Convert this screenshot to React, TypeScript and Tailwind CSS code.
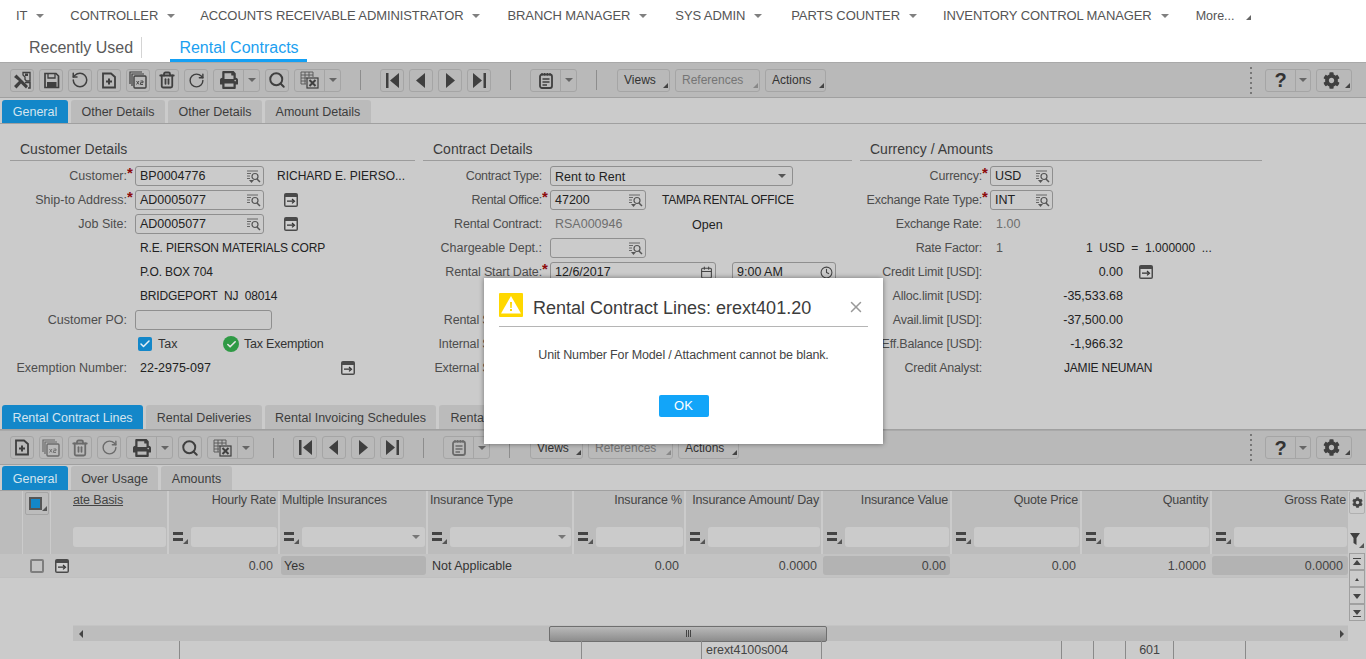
import React from "react";
import { Calendar, Clock, Search, RotateCw, RotateCcw, Trash2, Check, X } from "lucide-react";
import { FaCog, FaPrint } from "react-icons/fa";

const D = "#3f3f3f";

function Corner({ c = "#555" }: { c?: string }) {
  return (
    <svg width="5" height="5" viewBox="0 0 5 5" className="self-end mb-[3px] shrink-0">
      <path d="M5 0V5H0Z" fill={c} />
    </svg>
  );
}

function Caret({ c = "#777" }: { c?: string }) {
  return (
    <svg width="8" height="4" viewBox="0 0 8 4" className="shrink-0">
      <path d="M0 0H8L4 4Z" fill={c} />
    </svg>
  );
}

function Lookup({ arrow = true }: { arrow?: boolean }) {
  return (
    <svg width="15" height="15" viewBox="0 0 15 15" className="shrink-0">
      <path d="M1 2H12M1 4.5H5M1 7H4M1 9.5H4" stroke="#666" strokeWidth="1" fill="none" />
      <circle cx="9" cy="7.5" r="3" stroke="#555" strokeWidth="1.2" fill="none" />
      <path d="M11 10L14 13" stroke="#555" strokeWidth="1.5" />
      {arrow && <path d="M3 11H8L5.5 14Z" fill="#555" />}
    </svg>
  );
}

function NavIcon() {
  return (
    <svg width="14" height="14" viewBox="0 0 14 14" className="shrink-0">
      <rect width="14" height="14" rx="2" fill="#4a4a4a" />
      <rect x="1.5" y="4" width="11" height="8.5" fill="#d0d0d0" />
      <path d="M3 8.2H9.5M8 6L10.5 8.2L8 10.4" stroke="#333" strokeWidth="1.2" fill="none" />
    </svg>
  );
}

function SaveX() {
  return (
    <svg width="19" height="19" viewBox="0 0 19 19">
      <path d="M1 6L3.5 3.5L9 9L15 15L13 17.5L8 12.5L3.5 17.5L1 15L6 10Z" fill={D} />
      <path d="M10 1.5H17V10H13.5L12 8.5V6L10 4Z" fill="none" stroke={D} strokeWidth="1.3" />
      <rect x="12" y="2.5" width="3" height="2.5" fill={D} />
      <path d="M12 11.5L17 11.5V17H15" fill="none" stroke={D} strokeWidth="1.5" />
    </svg>
  );
}
function Save() {
  return (
    <svg width="17" height="17" viewBox="0 0 17 17">
      <path d="M2 1.5H13L15.5 4V15.5H2Z" fill="none" stroke={D} strokeWidth="1.7" />
      <path d="M5 2V6H12V2" fill="none" stroke={D} strokeWidth="1.3" />
      <rect x="4" y="10" width="9.5" height="5" fill={D} />
    </svg>
  );
}
function NewDoc() {
  return (
    <svg width="16" height="17" viewBox="0 0 16 17">
      <path d="M2 1.5H10L14 5V15.5H2Z" fill="none" stroke={D} strokeWidth="1.8" />
      <path d="M5 9.5H11M8 6.5V12.5" stroke={D} strokeWidth="2" />
    </svg>
  );
}
function Dup({ c = D }: { c?: string }) {
  return (
    <svg width="18" height="18" viewBox="0 0 18 18">
      <path d="M1 13V1H13" fill="none" stroke={c} strokeWidth="1.2" />
      <path d="M3 15V3H15" fill="none" stroke={c} strokeWidth="1.2" />
      <rect x="5" y="5" width="12" height="12" rx="1" fill="none" stroke={c} strokeWidth="1.4" />
      <path d="M7.5 10L10 13.5M10 10L7.5 13.5M11.5 10H14V11.7H11.5V13.5H14" fill="none" stroke={c} strokeWidth="0.9" />
    </svg>
  );
}
function Excel() {
  return (
    <svg width="19" height="18" viewBox="0 0 19 18">
      <path d="M1 1H13V6M1 1V13H6M1 4H13M1 7H7M1 10H6M5 1V13M9 1V6" fill="none" stroke="#555" strokeWidth="0.9" />
      <rect x="7" y="7" width="11" height="10" fill="none" stroke={D} strokeWidth="1.2" />
      <path d="M9.5 9L15.5 15M15.5 9L9.5 15" stroke={D} strokeWidth="2" />
    </svg>
  );
}
function Notes({ c = D }: { c?: string }) {
  return (
    <svg width="14" height="17" viewBox="0 0 14 17">
      <rect x="1" y="2.5" width="12" height="13.5" rx="2" fill="none" stroke={c} strokeWidth="1.8" />
      <path d="M3 1V3.5M5.6 1V3.5M8.4 1V3.5M11 1V3.5" stroke={c} strokeWidth="1.2" />
      <path d="M3.5 7H10.5M3.5 10H10.5M3.5 13H8" stroke={c} strokeWidth="1.3" />
    </svg>
  );
}
function NavArrow({ kind }: { kind: "first" | "prev" | "next" | "last" }) {
  const d = {
    first: "M2 1H4.5V16H2ZM15 1V16L6 8.5Z",
    prev: "M12 1V16L3 8.5Z",
    next: "M4 1V16L13 8.5Z",
    last: "M12.5 1H15V16H12.5ZM2 1V16L11 8.5Z",
  }[kind];
  return (
    <svg width="17" height="17" viewBox="0 0 17 17">
      <path d={d} fill={D} />
    </svg>
  );
}

function Btn({ children }: { children: React.ReactNode }) {
  return (
    <div className="h-[23px] w-6 shrink-0 rounded-[3px] border border-[#a5a5a5] flex items-center justify-center">
      {children}
    </div>
  );
}

function SplitBtn({ children, w = "w-[47px]" }: { children: React.ReactNode; w?: string }) {
  return (
    <div className={`h-[23px] ${w} shrink-0 rounded-[3px] border border-[#a5a5a5] flex items-center`}>
      <div className="flex-1 flex items-center justify-center h-full border-r border-[#a5a5a5]">{children}</div>
      <div className="w-[15px] flex items-center justify-center">
        <Caret c="#666" />
      </div>
    </div>
  );
}

function TextBtn({ label, w, dim }: { label: string; w: string; dim?: boolean }) {
  return (
    <div className={`h-[23px] ${w} shrink-0 rounded-[3px] border border-[#a5a5a5] flex items-center justify-between pl-[6px] pr-[1px] text-[12px] ${dim ? "text-[#757575]" : "text-[#333]"}`}>
      <span>{label}</span>
      <Corner c={dim ? "#888" : "#444"} />
    </div>
  );
}

const Sep = ({ mr }: { mr: string }) => (
  <div className={`w-px h-[20px] bg-[#8d8d8d] shrink-0 ml-[14px] ${mr}`} />
);

function Toolbar({ full, h }: { full: boolean; h: string }) {
  const dimC = full ? D : "#6b6b6b";
  return (
    <div className={`${h} bg-[#b9b9b9] border-t border-[#a9a9a9] border-b border-b-[#a0a0a0] flex items-center pl-[10px] pr-[14px] gap-[5px] overflow-hidden`}>
      {full && (
        <>
          <Btn><SaveX /></Btn>
          <Btn><Save /></Btn>
          <Btn><RotateCcw size={18} strokeWidth={2} color={D} /></Btn>
        </>
      )}
      <Btn><NewDoc /></Btn>
      <Btn><Dup c={dimC} /></Btn>
      <Btn><Trash2 size={18} strokeWidth={2.4} color={dimC} /></Btn>
      <Btn><RotateCw size={17} strokeWidth={2} color={dimC} /></Btn>
      <SplitBtn><FaPrint size={18} color={D} /></SplitBtn>
      <Btn><Search size={18} strokeWidth={2.6} color={D} /></Btn>
      <SplitBtn><Excel /></SplitBtn>
      <Sep mr="mr-[14px]" />
      <Btn><NavArrow kind="first" /></Btn>
      <Btn><NavArrow kind="prev" /></Btn>
      <Btn><NavArrow kind="next" /></Btn>
      <Btn><NavArrow kind="last" /></Btn>
      <Sep mr="mr-[14px]" />
      <SplitBtn><Notes c={dimC} /></SplitBtn>
      <Sep mr="mr-[15px]" />
      <TextBtn label="Views" w="w-[53px]" />
      <TextBtn label="References" w="w-[85px]" dim />
      <TextBtn label="Actions" w="w-[61px]" />
      <div className="ml-auto mr-[8px] flex flex-col gap-[3px]">
        {[0, 1, 2, 3, 4, 5].map((i) => (
          <div key={i} className="w-[2px] h-[2px] bg-[#777]" />
        ))}
      </div>
      <div className="h-[23px] w-[46px] rounded-[3px] border border-[#a5a5a5] flex items-center">
        <div className="flex-1 h-full border-r border-[#a5a5a5] flex items-center justify-center text-[20px] font-bold text-[#333]">?</div>
        <div className="w-[14px] flex items-center justify-center"><Caret c="#666" /></div>
      </div>
      <div className="h-[23px] w-9 rounded-[3px] border border-[#a5a5a5] flex items-center pl-[6px] pr-[1px] justify-between">
        <FaCog size={17} color={D} />
        <Corner c="#444" />
      </div>
    </div>
  );
}

function Tab({ label, w, active, low }: { label: string; w: string; active?: boolean; low?: boolean }) {
  return (
    <div className={`${w} h-full shrink-0 rounded-t-[3px] flex items-center justify-center text-[12.5px] ${low ? "pt-px" : ""} ${active ? "bg-[#1387c9] text-[#d5e5ef]" : "bg-[#bbbbbb] text-[#3d3d3d]"}`}>
      {label}
    </div>
  );
}

function Label({ text, w, star }: { text: string; w: string; star?: boolean }) {
  return (
    <>
      <div className={`${w} shrink-0 text-right text-[#4d4d4d] whitespace-nowrap flex justify-end`}>{text}</div>
      <div className="w-2 shrink-0 h-full text-[#8d0c0c] text-[15px] leading-[17px] font-bold overflow-hidden">{star ? "*" : ""}</div>
    </>
  );
}

function Input({ w, value, icon }: { w: string; value?: string; icon?: React.ReactNode }) {
  return (
    <div className={`${w} shrink-0 h-5 rounded-[3px] border border-[#8f8f8f] bg-[#cbcbcb] flex items-center justify-between pl-1 pr-[2px] text-[#222]`}>
      <span>{value}</span>
      {icon}
    </div>
  );
}

const Row = ({ children }: { children: React.ReactNode }) => (
  <div className="h-6 flex items-center whitespace-nowrap">{children}</div>
);

const V = ({ children, c = "text-[#222]", cls = "pl-[5px]" }: { children: React.ReactNode; c?: string; cls?: string }) => (
  <div className={`${c} ${cls} whitespace-nowrap`}>{children}</div>
);

function Section({ title, w, children }: { title: string; w: string; children: React.ReactNode }) {
  return (
    <div className={`${w} shrink-0`}>
      <div className="h-[37px] pt-[16px] pl-[10px] border-b border-[#9c9c9c] text-[14px] leading-[18px] text-[#3c3c3c]">{title}</div>
      <div className="pt-[3px]">{children}</div>
    </div>
  );
}

const UP = "text-[12px] tracking-[-0.15px]";

function Customer() {
  const W = "w-[117px]";
  return (
    <Section title="Customer Details" w="w-[405px]">
      <Row>
        <Label text="Customer:" w={W} star />
        <Input w="w-[129px]" value="BP0004776" icon={<Lookup />} />
        <V cls="pl-[13px] text-[12px]">RICHARD E. PIERSO...</V>
      </Row>
      <Row>
        <Label text="Ship-to Address:" w={W} star />
        <Input w="w-[129px]" value="AD0005077" icon={<Lookup arrow={false} />} />
        <div className="ml-5"><NavIcon /></div>
      </Row>
      <Row>
        <Label text="Job Site:" w={W} />
        <Input w="w-[129px]" value="AD0005077" icon={<Lookup arrow={false} />} />
        <div className="ml-5"><NavIcon /></div>
      </Row>
      <Row><Label text="" w={W} /><V cls={`pl-[5px] ${UP}`}>R.E. PIERSON MATERIALS CORP</V></Row>
      <Row><Label text="" w={W} /><V cls={`pl-[5px] ${UP}`}>P.O. BOX 704</V></Row>
      <Row><Label text="" w={W} /><V cls={`pl-[5px] ${UP}`}>BRIDGEPORT&nbsp; NJ&nbsp; 08014</V></Row>
      <Row>
        <Label text="Customer PO:" w={W} />
        <Input w="w-[137px]" />
      </Row>
      <Row>
        <Label text="" w={W} />
        <div className="ml-[3px] w-[14px] h-[14px] rounded-[2px] bg-[#1387c9] flex items-center justify-center">
          <Check size={12} strokeWidth={3} color="#e8f0f5" />
        </div>
        <div className="ml-[6px] text-[#333] w-[65px]">Tax</div>
        <div className="w-4 h-4 rounded-full bg-[#2f9a45] flex items-center justify-center">
          <Check size={11} strokeWidth={3.5} color="#e6e6e6" />
        </div>
        <div className="ml-[5px] text-[#333] tracking-[-0.2px]">Tax Exemption</div>
      </Row>
      <Row>
        <Label text="Exemption Number:" w={W} />
        <V cls="pl-[5px] w-[206px]">22-2975-097</V>
        <NavIcon />
      </Row>
    </Section>
  );
}

function Contract() {
  const W = "w-[119px] tracking-[-0.15px]";
  const W2 = "w-[119px] tracking-[-0.35px]";
  return (
    <Section title="Contract Details" w="w-[429px]">
      <Row>
        <Label text="Contract Type:" w={W2} />
        <div className="w-[243px] h-5 rounded-[3px] border border-[#8f8f8f] flex items-center justify-between pl-1 pr-[6px] text-[#222]">
          <span className="pt-px">Rent to Rent</span>
          <Caret c="#555" />
        </div>
      </Row>
      <Row>
        <Label text="Rental Office:" w={W2} star />
        <Input w="w-[96px]" value="47200" icon={<Lookup />} />
        <V cls="pl-[16px] text-[12px] tracking-[-0.2px]">TAMPA RENTAL OFFICE</V>
      </Row>
      <Row>
        <Label text="Rental Contract:" w={W} />
        <V c="text-[#6e6e6e]" cls="pl-[5px] w-[142px]">RSA000946</V>
        <div className="text-[#222] mt-[2px]">Open</div>
      </Row>
      <Row>
        <Label text="Chargeable Dept.:" w="w-[119px]" />
        <Input w="w-[96px]" icon={<Lookup />} />
      </Row>
      <Row>
        <Label text="Rental Start Date:" w={W} star />
        <Input w="w-[166px]" value="12/6/2017" icon={<Calendar size={13} color="#444" />} />
        <div className="ml-4">
          <Input w="w-[104px]" value="9:00 AM" icon={<Clock size={13} color="#444" />} />
        </div>
      </Row>
      <Row><Label text="" w={W} /></Row>
      <Row><Label text="Rental Sales Rep:" w={W} /></Row>
      <Row><Label text="Internal Sales Rep:" w={W} /></Row>
      <Row><Label text="External Sales Rep:" w={W} /></Row>
    </Section>
  );
}

function Currency() {
  const W = "w-[122px] tracking-[-0.2px]";
  const Num = ({ children }: { children: React.ReactNode }) => (
    <div className="w-[133px] text-right text-[#222]">{children}</div>
  );
  return (
    <Section title="Currency / Amounts" w="w-[402px]">
      <Row><Label text="Currency:" w={W} star /><Input w="w-[63px]" value="USD" icon={<Lookup />} /></Row>
      <Row><Label text="Exchange Rate Type:" w={W} star /><Input w="w-[63px]" value="INT" icon={<Lookup />} /></Row>
      <Row><Label text="Exchange Rate:" w={W} /><V c="text-[#6e6e6e]" cls="pl-[6px]">1.00</V></Row>
      <Row>
        <Label text="Rate Factor:" w={W} />
        <V c="text-[#555]" cls="pl-[6px] w-[96px]">1</V>
        <V cls="text-[12px]">1&nbsp; USD&nbsp; =&nbsp; 1.000000&nbsp; ...</V>
      </Row>
      <Row><Label text="Credit Limit [USD]:" w={W} /><Num>0.00</Num><div className="ml-4"><NavIcon /></div></Row>
      <Row><Label text="Alloc.limit [USD]:" w={W} /><Num>-35,533.68</Num></Row>
      <Row><Label text="Avail.limit [USD]:" w={W} /><Num>-37,500.00</Num></Row>
      <Row><Label text="Eff.Balance [USD]:" w={W} /><Num>-1,966.32</Num></Row>
      <Row><Label text="Credit Analyst:" w={W} /><V cls="pl-[74px] text-[12px] tracking-[-0.2px]">JAMIE NEUMAN</V></Row>
    </Section>
  );
}

function OpIcon() {
  return (
    <div className="w-[15px] ml-[2px] h-[20px] shrink-0 flex items-center justify-between">
      <svg width="10" height="9" viewBox="0 0 10 9" className="shrink-0 mb-[2px]">
        <path d="M0 0H10V3H0ZM0 6H10V9H0Z" fill="#444" />
      </svg>
      <Corner c="#555" />
    </div>
  );
}

type Col = {
  title: string;
  w: string;
  right?: boolean;
  select?: boolean;
  val?: string;
  hl?: boolean;
  under?: boolean;
  noOp?: boolean;
  left?: boolean;
  pr?: string;
};

const cols: Col[] = [
  { title: "ate Basis", w: "w-[94px]", under: true, noOp: true },
  { title: "Hourly Rate", w: "w-[111px]", right: true, val: "0.00", pr: "pr-[5px]" },
  { title: "Multiple Insurances", w: "w-[148px]", select: true, val: "Yes", hl: true, left: true },
  { title: "Insurance Type", w: "w-[146px]", select: true, val: "Not Applicable", left: true },
  { title: "Insurance %", w: "w-[112px]", right: true, val: "0.00", pr: "pr-[5px]" },
  { title: "Insurance Amount/ Day", w: "w-[137px]", right: true, val: "0.0000", pr: "pr-[4px]" },
  { title: "Insurance Value", w: "w-[129px]", right: true, val: "0.00", hl: true, pr: "pr-[4px]" },
  { title: "Quote Price", w: "w-[130px]", right: true, val: "0.00", pr: "pr-[4px]" },
  { title: "Quantity", w: "w-[130px]", right: true, val: "1.0000", pr: "pr-[4px]" },
  { title: "Gross Rate", w: "w-[138px]", right: true, val: "0.0000", hl: true, pr: "pr-[5px]" },
];

function Grid() {
  return (
    <div className="flex">
      <div className="w-[1348px] shrink-0">
        <div className="h-[63px] flex bg-[#bcbcbc]">
          <div className="w-[22px] shrink-0" />
          <div className="w-[29px] shrink-0 border-l border-r border-[#cbcbcb] flex justify-center pt-px">
            <div className="w-[24px] h-[23px] rounded-[2px] border border-[#a5a5a5] flex items-center justify-between pl-[3px] pr-px">
              <div className="w-[13px] h-[13px] bg-[#1387c9] border-2 border-[#555] shrink-0" />
              <Corner c="#555" />
            </div>
          </div>
          <div className="w-[22px] shrink-0" />
          {cols.map((c, i) => (
            <div key={c.title} className={`${c.w} shrink-0 ${i === 0 ? "" : "border-l-2 border-[#cbcbcb] pl-[2px]"} pr-px`}>
              <div className={`h-[36px] pt-[1px] leading-[16px] text-[12.5px] tracking-[-0.15px] text-[#444] whitespace-nowrap ${c.right ? "text-right pr-px" : ""} ${c.under ? "underline" : ""}`}>
                {c.title}
              </div>
              <div className="flex items-center gap-[3px]">
                {!c.noOp && <OpIcon />}
                <div className="flex-1 h-5 rounded-[3px] bg-[#cbcbcb] flex items-center justify-end pr-[5px]">
                  {c.select && <Caret c="#777" />}
                </div>
              </div>
            </div>
          ))}
        </div>
        <div className="h-6 flex bg-[#c3c3c3] border-b border-[#c0c0c0]">
          <div className="w-[73px] shrink-0 flex items-center pl-[30px] gap-[11px]">
            <div className="w-[14px] h-[14px] rounded-[2px] border-2 border-[#7e7e7e] shrink-0" />
            <NavIcon />
          </div>
          {cols.map((c) => (
            <div key={c.title} className={`${c.w} shrink-0 h-full flex items-center`}>
              {c.val && (
                <div className={`flex-1 h-[19px] rounded-[3px] flex items-center ${c.hl ? "bg-[#b3b3b3]" : ""} ${c.left ? "ml-[3px] pl-[3px] text-[#333]" : `ml-[2px] justify-end ${c.pr} text-[#444]`} ${c.hl ? "text-[#222]" : ""}`}>
                  {c.val}
                </div>
              )}
            </div>
          ))}
        </div>
        <div className="h-[47px]" />
        <div className="ml-[73px] h-4 bg-[#bdbdbd] border-t border-[#c4c4c4] flex items-center pl-[6px]">
          <svg width="5" height="8" viewBox="0 0 5 8" className="shrink-0"><path d="M4 0V8L0 4Z" fill="#444" /></svg>
          <div className="ml-[465px] w-[278px] h-4 shrink-0 rounded-[2px] border border-[#6f6f6f] bg-gradient-to-b from-[#b9b9b9] to-[#8d8d8d] flex items-center justify-center gap-px">
            <div className="w-px h-[7px] bg-[#444]" />
            <div className="w-px h-[7px] bg-[#444]" />
            <div className="w-px h-[7px] bg-[#444]" />
          </div>
          <svg width="5" height="8" viewBox="0 0 5 8" className="ml-[512px] shrink-0"><path d="M1 0V8L5 4Z" fill="#444" /></svg>
        </div>
      </div>
      <div className="w-[18px] shrink-0 flex flex-col items-center">
        <div className="w-4 h-[23px] border border-[#b0b0b0] rounded-[2px] flex items-center justify-center text-[#444]">
          <FaCog size={11} color="#444" />
        </div>
        <div className="h-[14px]" />
        <div className="h-[24px] flex items-center justify-center">
          <svg width="14" height="16" viewBox="0 0 14 16">
            <path d="M0 1H10L6.5 6V13L3.5 11V6Z" fill="#3f3f3f" />
            <path d="M14 11V16H9Z" fill="#555" />
          </svg>
        </div>
        <div className="h-[1px]" />
        {["top", "up", "down", "bottom"].map((k) => (
          <div key={k} className="w-4 h-[17px] border border-[#a0a0a0] flex items-center justify-center">
            <svg width="8" height="8" viewBox="0 0 8 8">
              {k === "top" && <path d="M0 0H8V1H0ZM4 2L8 7H0Z" fill="#444" />}
              {k === "up" && <path d="M4 3L6 6H2Z" fill="#444" />}
              {k === "down" && <path d="M0 2H8L4 7Z" fill="#444" />}
              {k === "bottom" && <path d="M0 1H8L4 6ZM0 7H8V8H0Z" fill="#444" />}
            </svg>
          </div>
        ))}
      </div>
    </div>
  );
}

const bottom = [
  { w: "w-[179px]", t: "" },
  { w: "w-[402px]", t: "" },
  { w: "w-[120px]", t: "" },
  { w: "w-[120px]", t: "erext4100s004" },
  { w: "w-[240px]", t: "" },
  { w: "w-[32px]", t: "" },
  { w: "w-[32px]", t: "" },
  { w: "w-[48px]", t: "601" },
  { w: "w-[72px]", t: "" },
  { w: "w-[121px]", t: "" },
];

const nav = [
  { t: "IT", m: "mr-[26px]" },
  { t: "CONTROLLER", m: "mr-[25px]" },
  { t: "ACCOUNTS RECEIVABLE ADMINISTRATOR", m: "mr-[27px]" },
  { t: "BRANCH MANAGER", m: "mr-[28px]" },
  { t: "SYS ADMIN", m: "mr-[29px]" },
  { t: "PARTS COUNTER", m: "mr-[26px]" },
  { t: "INVENTORY CONTROL MANAGER", m: "mr-[26px]" },
];

export default function App() {
  return (
    <div className="relative w-[1366px] h-[659px] overflow-hidden bg-[#cbcbcb] text-[12.5px] leading-[16px]" style={{ fontFamily: '"Liberation Sans", Arial, sans-serif' }}>
      <div className="bg-white">
        <div className="h-8 flex items-center pl-4 text-[13px] tracking-[-0.1px] text-[#555]">
          {nav.map((n) => (
            <div key={n.t} className={`flex items-center ${n.m} whitespace-nowrap`}>
              <span>{n.t}</span>
              <span className="ml-[9px]"><Caret c="#808080" /></span>
            </div>
          ))}
          <div className="flex items-center text-[12.5px] tracking-normal ml-[1px]">
            <span>More...</span>
            <svg width="5" height="5" viewBox="0 0 5 5" className="ml-[11px] mt-[3px]"><path d="M5 0V5H0Z" fill="#666" /></svg>
          </div>
        </div>
        <div className="h-[30px] flex text-[16px] pl-[29px]">
          <div className="w-[113px] h-[21px] mt-[5px] border-r border-[#d4d4d4] text-[#5a5a5a] leading-[21px]">Recently Used</div>
          <div className="ml-[28px] w-[137px] pl-px h-full border-b-[3px] border-[#14a0f4] text-[#1c9ff0] text-center leading-[31px]">Rental Contracts</div>
        </div>
      </div>

      <Toolbar full h="h-9" />

      <div className="h-[26px] flex items-end pl-[2px] gap-[3px] border-b border-[#a0a0a0] pt-[2px]">
        <Tab label="General" w="w-[66px]" active />
        <Tab label="Other Details" w="w-[94px]" />
        <Tab label="Other Details" w="w-[94px]" />
        <Tab label="Amount Details" w="w-[106px]" />
      </div>

      <div className="h-[281px] flex pl-[10px] gap-2">
        <Customer />
        <Contract />
        <Currency />
      </div>

      <div className="h-[25px] flex pl-[2px] gap-[3px] border-b border-[#a0a0a0]">
        <Tab label="Rental Contract Lines" w="w-[141px]" active low />
        <Tab label="Rental Deliveries" w="w-[116px]" low />
        <Tab label="Rental Invoicing Schedules" w="w-[171px]" low />
        <Tab label="Rental Charges" w="w-[110px]" low />
      </div>

      <Toolbar full={false} h="h-[35px]" />

      <div className="h-[26px] flex pl-[2px] gap-[3px] border-b border-[#a0a0a0] pt-px">
        <Tab label="General" w="w-[66px]" active low />
        <Tab label="Over Usage" w="w-[87px]" low />
        <Tab label="Amounts" w="w-[71px]" low />
      </div>

      <Grid />

      <div className="h-[18px] flex text-[#444]">
        {bottom.map((b, i) => (
          <div key={i} className={`${b.w} shrink-0 ${i === 0 ? "" : "border-l border-[#8a8a8a]"} ${b.t === "601" ? "text-center" : "pl-[4px]"} leading-[18px] tracking-[-0.05px]`}>{b.t}</div>
        ))}
      </div>

      <div className="absolute left-[484px] top-[278px] w-[399px] h-[166px] bg-white shadow-[0_0_5px_rgba(0,0,0,0.45)] px-[15px] pt-[15px]">
        <div className="flex items-start h-[34px] border-b border-[#b5b5b5]">
          <svg width="24" height="24" viewBox="0 0 24 24" className="shrink-0">
            <rect width="24" height="24" rx="1" fill="#ffd800" />
            <path d="M12 3L22 20.5H2Z" fill="#fff" />
            <path d="M11 9H13L12.7 15H11.3ZM11 16H13V18H11Z" fill="#ffd800" />
          </svg>
          <div className="ml-[10px] mt-[3px] leading-[24px] text-[18px] text-[#3c3c3c] whitespace-nowrap flex-1">Rental Contract Lines: erext401.20</div>
          <X size={18} strokeWidth={2} color="#999" className="mr-[3px] mt-[5px]" />
        </div>
        <div className="mt-[20px] text-center text-[#444] tracking-[-0.15px]">Unit Number For Model / Attachment cannot be blank.</div>
        <div className="mt-[32px] flex justify-center">
          <div className="w-[50px] h-[22px] rounded-[2px] bg-[#12a5f9] text-white text-[13px] flex items-center justify-center">OK</div>
        </div>
      </div>
    </div>
  );
}
